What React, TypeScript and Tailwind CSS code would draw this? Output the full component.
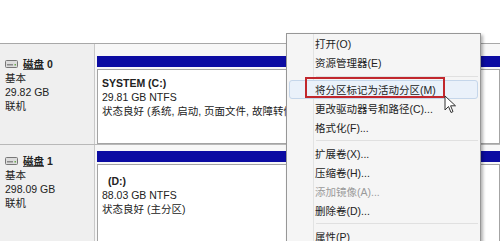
export default function App() {
  const font = { fontFamily: '"Liberation Sans", "Noto Sans CJK SC", sans-serif' };

  const disks = [
    {
      name: '0',
      size: '29.82 GB',
      label: 'SYSTEM  (C:)',
      fs: '29.81 GB NTFS',
      status: '状态良好 (系统, 启动, 页面文件, 故障转储, 主分区)',
    },
    {
      name: '1',
      size: '298.09 GB',
      label: '(D:)',
      fs: '88.03 GB NTFS',
      status: '状态良好 (主分区)',
    },
  ];

  return (
    <div
      className="relative h-[241px] w-[500px] overflow-hidden bg-white text-[10.5px] leading-[14px] text-[#222]"
      style={font}
    >
      <div className="h-[43px] bg-white" />
      <div className="border-t border-[#a8a8a8]">
        {disks.map((d, i) => (
          <div
            key={d.name}
            className={`flex ${i === 0 ? 'h-[101px] border-b border-[#b8b8b8]' : 'h-[97px]'}`}
          >
            <div className={`w-[95px] shrink-0 border-r border-[#c8c8c8] bg-[#efefef] pl-[5px] ${i === 0 ? 'pt-[13px]' : 'pt-[9px]'}`}>
              <div className="flex items-center gap-[5px]">
                <DiskIcon />
                <span className="font-bold">
                  <span className="underline decoration-[#555]">磁盘</span> {d.name}
                </span>
              </div>
              <div>基本</div>
              <div>{d.size}</div>
              <div>联机</div>
            </div>
            <div className={`flex flex-1 flex-col bg-[#f7f7f7] pl-[2px] ${i === 0 ? 'pt-[12px]' : 'pt-[6px]'}`}>
              <div className="h-[11px] bg-[#0c0ca2]" />
              <div className="mt-[2px] flex-1 border border-[#a4a4a4] bg-white pl-[4px] pt-[6px]">
                <div className={`font-bold ${i === 1 ? 'pl-[6px] pt-[3px]' : ''}`}>{d.label}</div>
                <div>{d.fs}</div>
                <div className="whitespace-nowrap">{d.status}</div>
              </div>
            </div>
          </div>
        ))}
      </div>

      <ContextMenu />

      <div className="absolute left-[305px] top-[77px] h-[21px] w-[140px] border-2 border-[#c1272d]" />

      <svg className="absolute left-[444px] top-[95px]" width="13" height="19" viewBox="0 0 13 19">
        <path
          d="M1 1 L1 15 L4.5 11.5 L7 17.5 L9 16.6 L6.6 10.8 L11.5 10.8 Z"
          fill="#fff"
          stroke="#333"
          strokeWidth="1"
          strokeLinejoin="round"
        />
      </svg>
    </div>
  );
}

function DiskIcon() {
  return (
    <svg width="13" height="8" viewBox="0 0 13 8">
      <rect x="0.5" y="0.5" width="12" height="7" rx="1" fill="#dcdcdc" stroke="#777" />
      <rect x="2" y="4" width="6" height="1.5" fill="#8a8a8a" />
      <rect x="9.5" y="4" width="1.5" height="1.5" fill="#6aa84f" />
    </svg>
  );
}

function ContextMenu() {
  const items: (string | null)[] = [
    '打开(O)',
    '资源管理器(E)',
    'sep8',
    '将分区标记为活动分区(M)',
    '更改驱动器号和路径(C)...',
    '格式化(F)...',
    null,
    '扩展卷(X)...',
    '压缩卷(H)...',
    '添加镜像(A)...',
    '删除卷(D)...',
    null,
    '属性(P)',
  ];

  return (
    <div className="absolute left-[286px] top-[33px] w-[195px] border border-[#979797] bg-[#f5f5f5] px-[2px] shadow-[2px_2px_3px_rgba(0,0,0,0.3)]">
      <div className="absolute bottom-0 left-[26px] top-0 w-px bg-[#e2e3e3]" />
      {items.map((t, i) =>
        t === null || t === 'sep8' ? (
          <div key={i} className={`flex items-center pl-[27px] ${t === 'sep8' ? 'h-[8px]' : 'h-[7px]'}`}>
            <div className="h-px flex-1 bg-[#e0e0e0]" />
          </div>
        ) : (
          <div
            key={i}
            className={`relative flex h-[19px] items-center rounded-[3px] pl-[25px] ${
              t.startsWith('将分区')
                ? 'border border-[#c5d6ea] bg-[#eaf1fa]'
                : 'border border-transparent'
            } ${t.startsWith('添加镜像') ? 'text-[#9a9a9a]' : 'text-[#222]'}`}
          >
            {t}
          </div>
        ),
      )}
    </div>
  );
}
